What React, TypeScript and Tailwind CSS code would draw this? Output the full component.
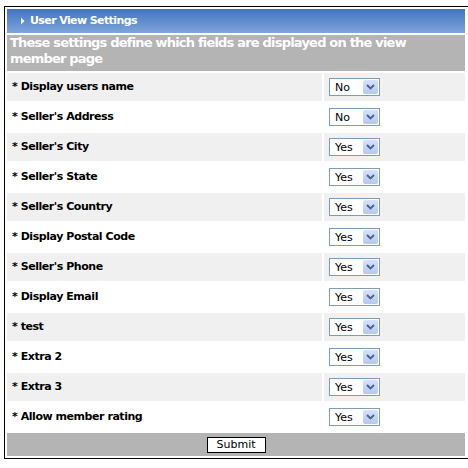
import React from "react";

const rows: [string, string][] = [
  ["Display users name", "No"],
  ["Seller's Address", "No"],
  ["Seller's City", "Yes"],
  ["Seller's State", "Yes"],
  ["Seller's Country", "Yes"],
  ["Display Postal Code", "Yes"],
  ["Seller's Phone", "Yes"],
  ["Display Email", "Yes"],
  ["test", "Yes"],
  ["Extra 2", "Yes"],
  ["Extra 3", "Yes"],
  ["Allow member rating", "Yes"],
];

function Select({ value }: { value: string }) {
  return (
    <div className="flex h-[18px] w-[51px] items-center justify-between border border-[#7f9db9] bg-white pl-[5px] pr-[1px]">
      <span className="text-[11px] leading-none text-black" style={{ fontFamily: "Tahoma, 'DejaVu Sans', sans-serif" }}>
        {value}
      </span>
      <div className="flex h-[14px] w-[15px] items-center justify-center rounded-[2px] bg-gradient-to-b from-[#d6e2fb] to-[#b4c8f3]">
        <svg width="9" height="6" viewBox="0 0 9 6">
          <path d="M1 1 L4.5 4.5 L8 1" fill="none" stroke="#4d6185" strokeWidth="1.8" />
        </svg>
      </div>
    </div>
  );
}

export default function App() {
  return (
    <div className="bg-white h-[468px] w-[468px] overflow-hidden" style={{ fontFamily: "'DejaVu Sans', Verdana, sans-serif" }}>
      <div className="ml-[4px] mt-[6px] w-[472px] border border-black p-[2px]">
        <div className="w-[458px] flex flex-col gap-[2px]">
          <div className="flex h-[24px] items-center bg-gradient-to-b from-[#4273bf] to-[#7ea6da] pl-[13px]">
            <svg width="6" height="8" viewBox="0 0 6 8" className="mr-[4px]">
              <path d="M1 0.5 L4.5 4 L1 7.5 Z" fill="#ffffff" />
            </svg>
            <span className="text-[11px] font-bold tracking-[-0.6px] text-white">User View Settings</span>
          </div>
          <div className="bg-[#b4b4b4] px-[3px] pt-0 pb-[4px] text-[13px] font-bold leading-[16px] tracking-[-0.8px] text-white h-[36px]">
            These settings define which fields are displayed on the view member page
          </div>
          {rows.map(([label, value], i) => (
            <div key={label} className="flex h-[28px] gap-[2px]">
              <div className={`flex w-[315px] items-center pl-[5px] text-[11px] font-bold tracking-[-0.45px] text-black ${i % 2 === 0 ? "bg-[#f0f0f0]" : "bg-white"}`}>
                * {label}
              </div>
              <div className={`flex flex-1 items-center pl-[5px] ${i % 2 === 0 ? "bg-[#f0f0f0]" : "bg-white"}`}>
                <Select value={value} />
              </div>
            </div>
          ))}
          <div className="flex h-[23px] items-center justify-center bg-[#b4b4b4]">
            <button className="h-[16px] w-[59px] border border-black bg-white text-[11px] leading-none text-black" style={{ fontFamily: "Tahoma, 'DejaVu Sans', sans-serif" }}>
              Submit
            </button>
          </div>
        </div>
      </div>
    </div>
  );
}
